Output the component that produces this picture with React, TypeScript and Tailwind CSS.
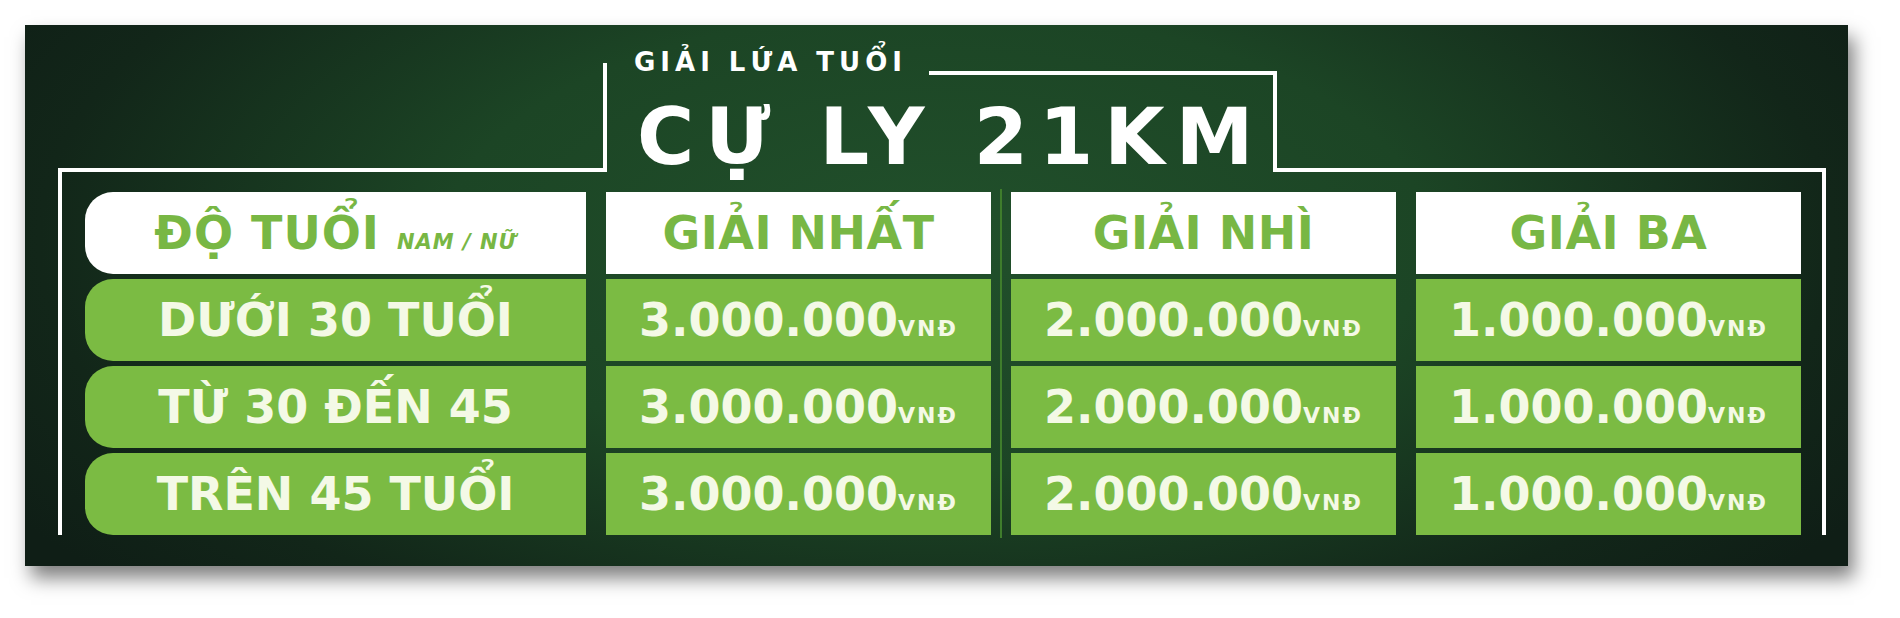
import React from 'react';

const font = "font-['DejaVu_Sans',sans-serif] font-bold";

const rows = [
  { age: 'DƯỚI 30 TUỔI', prizes: ['3.000.000', '2.000.000', '1.000.000'] },
  { age: 'TỪ 30 ĐẾN 45', prizes: ['3.000.000', '2.000.000', '1.000.000'] },
  { age: 'TRÊN 45 TUỔI', prizes: ['3.000.000', '2.000.000', '1.000.000'] },
];

const headers = ['GIẢI NHẤT', 'GIẢI NHÌ', 'GIẢI BA'];

const divider =
  'relative before:absolute before:left-[-11px] before:top-[-3px] before:bottom-[-3px] before:w-[2px] before:bg-[#3f7d2c]';

const Money: React.FC<{ value: string; split?: boolean }> = ({ value, split }) => (
  <div className={`flex items-center justify-center bg-[#7bbb43] text-[#f4f9e6] ${split ? divider : ''}`}>
    <span className="text-[46px] leading-none tracking-[0px]">
      {value}
      <span className="text-[22px] tracking-[2px]">VNĐ</span>
    </span>
  </div>
);

const App: React.FC = () => {
  return (
    <div className={`min-h-screen bg-white pl-[25px] pt-[25px] ${font}`}>
      <div className="w-[1823px] h-[541px] flex flex-col pl-[33px] pr-[22px] pt-[23px] bg-[radial-gradient(ellipse_60%_95%_at_50%_40%,#21502b_0%,#1c4525_45%,#122619_82%,#0f1e16_100%)] shadow-[6px_12px_18px_rgba(0,0,0,0.5)]">
        {/* Title tab + top frame line */}
        <div className="flex items-end">
          <div className="w-[545px] h-[4px] bg-white" />
          <div className="flex w-[674px] h-[124px]">
            <div className="w-[4px] mt-[15px] bg-white" />
            <div className="flex-1 flex flex-col">
              <div className="flex items-end h-[27px]">
                <span className="ml-[27px] text-[26px] leading-none tracking-[5px] text-white whitespace-nowrap">
                  GIẢI LỨA TUỔI
                </span>
                <div className="flex-1 ml-[22px] h-[4px] bg-white" />
              </div>
              <div className="h-[97px] pt-[23px] pl-[30px] text-[78px] leading-none tracking-[11px] text-white whitespace-nowrap">
                CỰ LY 21KM
              </div>
            </div>
            <div className="w-[4px] mt-[23px] bg-white" />
          </div>
          <div className="flex-1 h-[4px] bg-white" />
        </div>

        {/* Frame + table */}
        <div className="h-[363px] border-x-4 border-white pl-[23px] pr-[21px] pt-[20px]">
          <div className="grid grid-cols-[501px_1fr_1fr_1fr] auto-rows-[82px] gap-x-[20px] gap-y-[5px]">
            <div className="flex items-center justify-center rounded-l-[28px] bg-white text-[#78b744]">
              <span className="text-[46px] leading-none tracking-[1px]">
                ĐỘ TUỔI{' '}
                <span className="text-[21px] italic tracking-[1px]">NAM / NỮ</span>
              </span>
            </div>
            {headers.map((h, i) => (
              <div
                key={h}
                className={`flex items-center justify-center bg-white text-[#78b744] ${i === 1 ? divider : ''}`}
              >
                <span className="text-[46px] leading-none tracking-[0.5px]">{h}</span>
              </div>
            ))}

            {rows.map((r) => (
              <React.Fragment key={r.age}>
                <div className="flex items-center justify-center rounded-l-[28px] bg-[#7bbb43] text-[#f4f9e6]">
                  <span className="text-[46px] leading-none tracking-[0px]">{r.age}</span>
                </div>
                {r.prizes.map((p, i) => (
                  <Money key={i} value={p} split={i === 1} />
                ))}
              </React.Fragment>
            ))}
          </div>
        </div>
      </div>
    </div>
  );
};

export default App;
